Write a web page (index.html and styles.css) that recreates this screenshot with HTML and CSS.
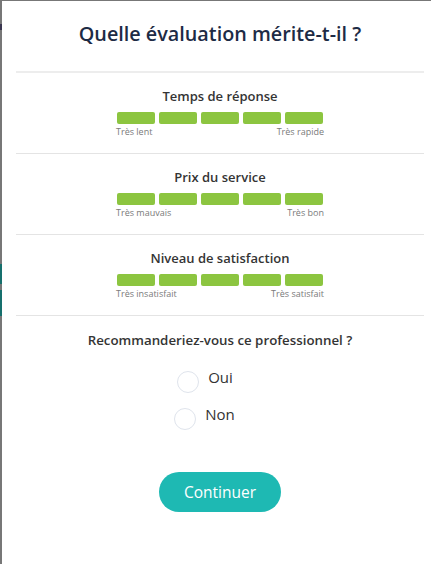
FILE: index.html
```html
<!DOCTYPE html>
<html lang="fr">
<head>
    <meta charset="UTF-8">
    <meta name="viewport" content="width=device-width, initial-scale=1.0">
    <title>Évaluation</title>
    <link rel="stylesheet" href="styles.css">
</head>
<body>
    <div class="modal">
        <h1 class="modal-title">Quelle évaluation mérite-t-il ?</h1>

        <div class="rating">
            <h2 class="rating-title">Temps de réponse</h2>
            <div class="rating-bar">
                <span class="step"></span><span class="step"></span><span class="step"></span><span class="step"></span><span class="step"></span>
            </div>
            <div class="rating-labels">
                <span>Très lent</span>
                <span>Très rapide</span>
            </div>
        </div>

        <div class="rating">
            <h2 class="rating-title">Prix du service</h2>
            <div class="rating-bar">
                <span class="step"></span><span class="step"></span><span class="step"></span><span class="step"></span><span class="step"></span>
            </div>
            <div class="rating-labels">
                <span>Très mauvais</span>
                <span>Très bon</span>
            </div>
        </div>

        <div class="rating">
            <h2 class="rating-title">Niveau de satisfaction</h2>
            <div class="rating-bar">
                <span class="step"></span><span class="step"></span><span class="step"></span><span class="step"></span><span class="step"></span>
            </div>
            <div class="rating-labels">
                <span>Très insatisfait</span>
                <span>Très satisfait</span>
            </div>
        </div>

        <div class="recommend">
            <h2 class="rating-title question">Recommanderiez-vous ce professionnel ?</h2>
            <div class="options">
                <label class="option option-yes"><span class="radio"></span>Oui</label>
                <label class="option"><span class="radio"></span>Non</label>
            </div>
        </div>

        <div class="actions">
            <button type="button" class="btn-continue">Continuer</button>
        </div>
    </div>
</body>
</html>
```

FILE: styles.css
```css
html, body {
    height: 100%;
}
body {
    margin: 0;
    overflow: hidden;
    font-family: "Open Sans", Arial, sans-serif;
    background: linear-gradient(to bottom,
        #777 0, #777 24px,
        #3b3750 24px, #3b3750 30px,
        #777 30px, #777 264px,
        #16706d 264px, #16706d 284px,
        #777 284px, #777 290px,
        #16706d 290px, #16706d 316px,
        #777 316px);
}
.modal {
    width: 436px;
    height: 563px;
    margin: 1px 0 0 2px;
    padding: 0 14px;
    box-sizing: border-box;
    background-color: #fff;
}
.modal-title {
    margin: 0;
    padding: 19px 0 24px;
    font-size: 19.8px;
    line-height: 27px;
    font-weight: 600;
    color: #1d2b45;
    text-align: center;
    border-bottom: 2px solid #ededed;
}
.rating {
    padding: 14px 0 15px;
    border-bottom: 1px solid #e4e4e4;
}
.rating-title {
    margin: 0 0 7px;
    font-size: 13px;
    line-height: 18px;
    font-weight: 600;
    color: #343434;
    text-align: center;
}
.rating-bar {
    display: flex;
    gap: 4px;
    width: 206px;
    margin: 0 auto;
}
.step {
    width: 38px;
    height: 12px;
    border-radius: 2px;
    background-color: #8cc540;
}
.rating-labels {
    display: flex;
    justify-content: space-between;
    width: 208px;
    margin: 2px auto 0;
    font-size: 9px;
    line-height: 12px;
    color: #7a7a7a;
}
.recommend {
    padding: 15px 0 0;
}
.question {
    margin-bottom: 17px;
    font-size: 13.3px;
}
.options {
    display: flex;
    flex-direction: column;
    align-items: center;
    gap: 10px;
    padding-right: 31px;
}
.option {
    display: flex;
    align-items: flex-start;
    gap: 9px;
    font-size: 15px;
    line-height: 22px;
    color: #333;
}
.option-yes {
    padding-left: 1px;
}
.radio {
    width: 20px;
    height: 20px;
    margin-top: 5px;
    border: 1px solid #dfe4ec;
    border-radius: 50%;
}
.actions {
    display: flex;
    justify-content: center;
    padding-top: 42px;
}
.btn-continue {
    width: 122px;
    height: 40px;
    border: none;
    border-radius: 20px;
    background-color: #1eb9b3;
    color: #fff;
    font-family: inherit;
    font-size: 15.5px;
    cursor: pointer;
}
```
